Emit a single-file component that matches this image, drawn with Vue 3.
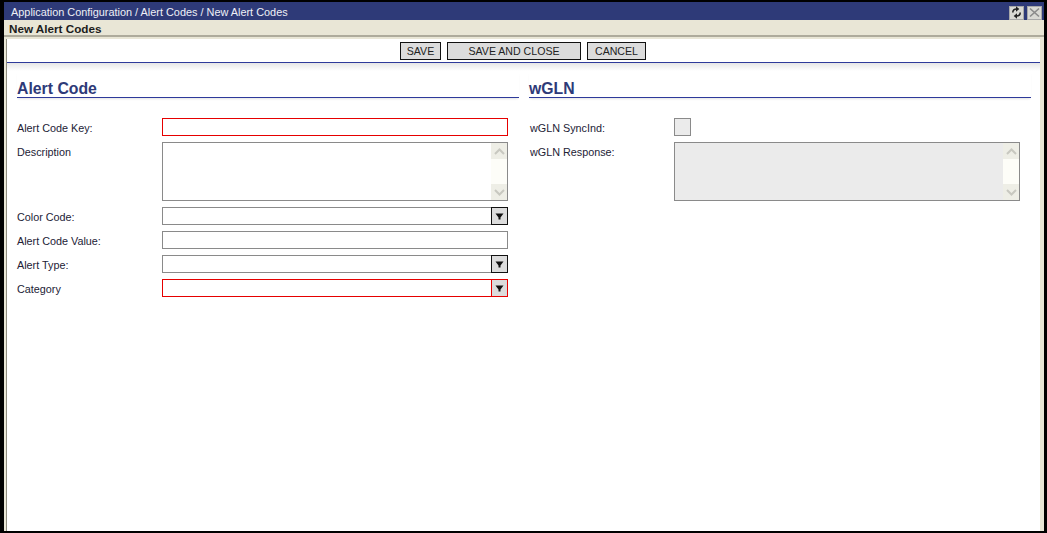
<script setup>
const left = [
  { label: 'Alert Code Key:', kind: 'input', req: true },
  { label: 'Description', kind: 'area' },
  { label: 'Color Code:', kind: 'select' },
  { label: 'Alert Code Value:', kind: 'input' },
  { label: 'Alert Type:', kind: 'select' },
  { label: 'Category', kind: 'select', req: true }
]
</script>

<template>
  <div class="window">
    <div class="titlebar">
      <span class="crumb">Application Configuration / Alert Codes / New Alert Codes</span>
      <div class="winbtns">
        <button class="winbtn" aria-label="Refresh">
          <svg width="11" height="13" viewBox="0 0 11 13">
            <path d="M1.800 6.500C1.800 4.300 3.300 3 5.500 3" stroke="#222" stroke-width="1.600" fill="none"/>
            <path d="M5 0.200L8.300 3 5 5.800z" fill="#222"/>
            <path d="M9.200 6.500C9.200 8.700 7.700 10 5.500 10" stroke="#222" stroke-width="1.600" fill="none"/>
            <path d="M6 7.200L2.700 10 6 12.800z" fill="#222"/>
          </svg>
        </button>
        <button class="winbtn" aria-label="Close">
          <svg width="11" height="11" viewBox="0 0 11 11"><path d="M1 1.500l9 8M10 1.500l-9 8" stroke="#8a8a8a" stroke-width="1.600" fill="none"/></svg>
        </button>
      </div>
    </div>
    <div class="subbar">New Alert Codes</div>
    <div class="frame">
      <div class="content">
        <div class="toolbar">
          <button class="tbtn save">SAVE</button>
          <button class="tbtn saveclose">SAVE AND CLOSE</button>
          <button class="tbtn cancel">CANCEL</button>
        </div>
        <div class="shadow"></div>
        <div class="columns">
          <section class="col">
            <h2>Alert Code</h2>
            <div class="form">
              <div v-for="f in left" :key="f.label" class="row">
                <label>{{ f.label }}</label>
                <div v-if="f.kind === 'input'" class="field" :class="{ req: f.req }"></div>
                <div v-else-if="f.kind === 'area'" class="field area">
                  <div class="scroll">
                    <span class="sb"><svg width="11" height="7" viewBox="0 0 11 7"><path d="M1 6l4.500-4.500L10 6" stroke="#c8c8c0" stroke-width="2" fill="none"/></svg></span>
                    <span class="sb"><svg width="11" height="7" viewBox="0 0 11 7"><path d="M1 1l4.500 4.500L10 1" stroke="#c8c8c0" stroke-width="2" fill="none"/></svg></span>
                  </div>
                </div>
                <div v-else class="field select" :class="{ req: f.req }">
                  <span class="arrow"><svg width="9" height="9" viewBox="0 0 9 9"><path d="M0.500 1.500h8L5.500 5.500V7.500h-2V5.500z" fill="#111"/></svg></span>
                </div>
              </div>
            </div>
          </section>
          <section class="col">
            <h2>wGLN</h2>
            <div class="form">
              <div class="row">
                <label>wGLN SyncInd:</label>
                <div class="check"></div>
              </div>
              <div class="row">
                <label>wGLN Response:</label>
                <div class="field area disabled">
                  <div class="scroll">
                    <span class="sb"><svg width="11" height="7" viewBox="0 0 11 7"><path d="M1 6l4.500-4.500L10 6" stroke="#c8c8c0" stroke-width="2" fill="none"/></svg></span>
                    <span class="sb"><svg width="11" height="7" viewBox="0 0 11 7"><path d="M1 1l4.500 4.500L10 1" stroke="#c8c8c0" stroke-width="2" fill="none"/></svg></span>
                  </div>
                </div>
              </div>
            </div>
          </section>
        </div>
      </div>
    </div>
  </div>
</template>

<style>
html, body { margin: 0; background: #000; }
</style>

<style scoped>
.window {
  box-sizing: border-box;
  width: 1047px;
  height: 533px;
  border-style: solid;
  border-color: #000;
  border-width: 2px 3px 2px 4px;
  background: #e9e6d6;
  display: flex;
  flex-direction: column;
  font-family: "Liberation Sans", Arial, sans-serif;
  overflow: hidden;
}
.titlebar {
  height: 18px;
  flex: none;
  background: #2e3a78;
  color: #eef0f6;
  font-size: 10.900px;
  display: flex;
  align-items: center;
  justify-content: space-between;
  padding: 0 2px 0 7px;
}
.crumb { padding-top: 2px; }
.winbtns { display: flex; gap: 3px; padding-top: 3px; }
.winbtn {
  width: 15px;
  height: 14px;
  padding: 0;
  border: 1px solid #a8a8a8;
  background: #d9d9d4;
  display: flex;
  align-items: center;
  justify-content: center;
}
.subbar {
  height: 15px;
  flex: none;
  padding-left: 5px;
  font-size: 11.700px;
  font-weight: bold;
  line-height: 17px;
  color: #1c1c1c;
  border-bottom: 2px solid #aeab9c;
}
.frame {
  flex: 1;
  min-height: 0;
  padding: 2px 4px 0 3px;
  display: flex;
}
.content {
  flex: 1;
  min-width: 0;
  background: #fff;
  box-shadow: -1px 0 0 #8f8d80;
}
.toolbar {
  height: 20px;
  border-bottom: 1px solid #2e3a9a;
  display: flex;
  align-items: flex-start;
  padding-top: 3px;
  padding-left: 393px;
  gap: 6px;
}
.tbtn {
  height: 18px;
  padding: 0;
  box-sizing: border-box;
  border: 1px solid #111;
  background: #dcdcdc;
  color: #222;
  font-family: inherit;
  font-size: 10.600px;
}
.save { width: 41px; }
.saveclose { width: 134px; }
.cancel { width: 59px; }
.shadow {
  height: 8px;
  background: linear-gradient(#e6e6e6, #fff);
}
.columns {
  display: grid;
  grid-template-columns: 502px 502px;
  column-gap: 10px;
  padding-left: 10px;
}
.col h2 {
  margin: 0;
  height: 27px;
  box-sizing: border-box;
  padding-top: 8px;
  border-bottom: 1px solid #2e3a9a;
  box-shadow: 0 2px 2px -1px #e4e4e4;
  color: #2e3a78;
  font-size: 15.800px;
  font-weight: bold;
  line-height: 19px;
}
.form {
  display: flex;
  flex-direction: column;
  gap: 6px;
  padding-top: 20px;
}
.row {
  display: flex;
  align-items: flex-start;
}
label {
  width: 145px;
  height: 18px;
  flex: none;
  font-size: 10.800px;
  color: #222236;
  line-height: 20px;
}
.col:nth-child(2) label { padding-left: 1px; width: 144px; }
.field {
  box-sizing: border-box;
  width: 346px;
  height: 18px;
  border: 1px solid #8a8a8a;
  background: #fff;
}
.field.req { border-color: #e60000; }
.area {
  height: 59px;
  display: flex;
  justify-content: flex-end;
}
.disabled { background: #ebebeb; }
.scroll {
  width: 16px;
  background: #fdfdf8;
  display: flex;
  flex-direction: column;
  justify-content: space-between;
}
.sb {
  height: 16px;
  background: #eeeee6;
  display: flex;
  align-items: center;
  justify-content: center;
}
.select { display: flex; justify-content: flex-end; }
.arrow {
  box-sizing: border-box;
  width: 17px;
  background: #dcdcdc;
  display: flex;
  align-items: center;
  justify-content: center;
  margin: -1px -1px -1px 0;
  border: 1px solid #111;
}
.select.req .arrow { border-color: #e60000; }
.check {
  box-sizing: border-box;
  width: 17px;
  height: 18px;
  border: 1px solid #8a8a8a;
  background: #ebebeb;
}
</style>
